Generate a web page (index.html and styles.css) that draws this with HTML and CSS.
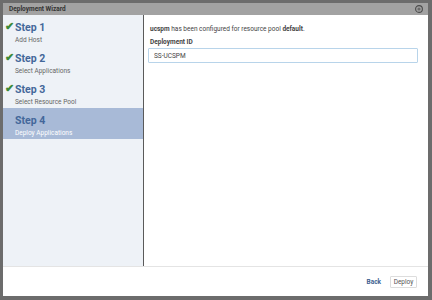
FILE: index.html
```html
<!DOCTYPE html>
<html lang="en">

<head>
    <meta charset="UTF-8">
    <meta name="viewport" content="width=device-width, initial-scale=1.0">
    <title>Deployment Wizard</title>
    <link rel="stylesheet" href="styles.css">
</head>

<body>
    <div class="modal">
        <!-- Title bar -->
        <div class="modal-title">
            <span>Deployment Wizard</span>
            <svg class="close-icon" width="8" height="8" viewBox="0 0 8 8">
                <circle cx="4" cy="4" r="3.4" fill="none" stroke="#4a4a4a" stroke-width="1.1"/>
                <circle cx="4" cy="4" r="1.6" fill="#6a6a6a"/>
            </svg>
        </div>

        <div class="modal-body">
            <!-- Steps -->
            <div class="steps">
                <div class="step done">
                    <div class="step-title"><span class="check">&#10004;</span>Step 1</div>
                    <div class="step-sub">Add Host</div>
                </div>
                <div class="step done">
                    <div class="step-title"><span class="check">&#10004;</span>Step 2</div>
                    <div class="step-sub">Select Applications</div>
                </div>
                <div class="step done">
                    <div class="step-title"><span class="check">&#10004;</span>Step 3</div>
                    <div class="step-sub">Select Resource Pool</div>
                </div>
                <div class="step active">
                    <div class="step-title">Step 4</div>
                    <div class="step-sub">Deploy Applications</div>
                </div>
            </div>

            <!-- Content -->
            <div class="content">
                <p class="info"><b>ucspm</b> has been configured for resource pool <b>default</b>.</p>
                <label for="dep-id">Deployment ID</label>
                <input type="text" id="dep-id" value="SS-UCSPM">
            </div>
        </div>

        <!-- Footer -->
        <div class="modal-footer">
            <a class="btn-back">Back</a>
            <button class="btn-deploy">Deploy</button>
        </div>
    </div>
</body>

</html>
```

FILE: styles.css
```css
/* Dialog */
body {
    margin: 0;
    padding: 3px 4px 4px 3px;
    background-color: #6c6c6c;
    font-family: Roboto, "Liberation Sans", sans-serif;
    height: 300px;
    box-sizing: border-box;
}

.modal {
    width: 425px;
    height: 293px;
    display: flex;
    flex-direction: column;
    background-color: #fff;
}

.modal-title {
    height: 12px;
    background-color: #a2a2a2;
    display: flex;
    align-items: center;
    justify-content: space-between;
    padding: 0 5px 0 6px;
    font-size: 6.5px;
    font-weight: bold;
    color: #333;
}

.close-icon {
    display: block;
}

.modal-body {
    flex: 1;
    display: flex;
}

.steps {
    width: 140px;
    background-color: #eef2f7;
    border-right: 1px solid #5a5a5a;
}

.step {
    height: 31px;
    padding-left: 12px;
    box-sizing: border-box;
    padding-top: 6px;
}

.step-title {
    position: relative;
    font-size: 10.5px;
    font-weight: bold;
    color: #43679a;
    line-height: 13px;
}

.check {
    position: absolute;
    left: -10px;
    top: -1px;
    color: #3d8a3a;
    font-size: 11px;
}

.step-sub {
    font-size: 6.5px;
    color: #666;
    margin-top: 2px;
}

.step.active {
    background-color: #a8bad7;
}

.step.active .step-sub {
    color: #fff;
}

.content {
    flex: 1;
    padding: 10px 10px 0 4px;
}

.info {
    margin: 0 0 5px 2px;
    font-size: 6.5px;
    color: #444;
}

label {
    display: block;
    margin-left: 2px;
    font-size: 6.5px;
    font-weight: bold;
    color: #444;
}

input[type="text"] {
    display: block;
    width: 100%;
    height: 15px;
    margin-top: 2px;
    padding: 0 5px;
    box-sizing: border-box;
    border: 1px solid #b8d4ea;
    border-radius: 1px;
    font-family: inherit;
    font-size: 6.5px;
    color: #444;
}

.modal-footer {
    height: 29px;
    border-top: 1px solid #e4e4e4;
    display: flex;
    align-items: center;
    justify-content: flex-end;
    gap: 9px;
    padding-right: 11px;
}

.btn-back {
    font-size: 6.5px;
    font-weight: bold;
    color: #3e6191;
}

.btn-deploy {
    height: 12px;
    width: 27px;
    padding: 0;
    background-color: #fff;
    border: 1px solid #ddd;
    border-radius: 1px;
    font-family: inherit;
    font-size: 6.5px;
    color: #555;
}
```
